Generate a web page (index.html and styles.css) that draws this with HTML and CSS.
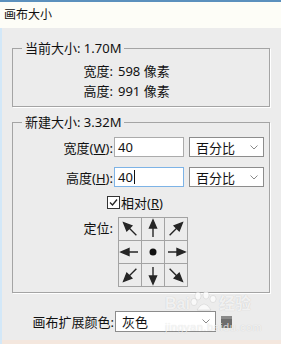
FILE: index.html
```html
<!DOCTYPE html>
<html lang="zh-CN">
<head>
    <meta charset="UTF-8">
    <meta name="viewport" content="width=device-width, initial-scale=1.0">
    <title>画布大小</title>
    <link rel="stylesheet" href="styles.css">
</head>
<body>
    <div class="window">
        <div class="titlebar">画布大小</div>

        <div class="content">
            <fieldset class="group current">
                <legend>当前大小: 1.70M</legend>
                <div class="row info">
                    <span class="label">宽度:</span>
                    <span class="value">598 像素</span>
                </div>
                <div class="row info">
                    <span class="label">高度:</span>
                    <span class="value">991 像素</span>
                </div>
            </fieldset>

            <fieldset class="group new">
                <legend>新建大小: 3.32M</legend>
                <div class="row field">
                    <span class="label">宽度(<u>W</u>):</span>
                    <div class="input">40</div>
                    <div class="select">百分比
                        <svg class="chevron" width="8" height="5" viewBox="0 0 8 5"><polyline points="0.5,0.5 4,4 7.5,0.5"/></svg>
                    </div>
                </div>
                <div class="row field">
                    <span class="label">高度(<u>H</u>):</span>
                    <div class="input focused">40<span class="caret"></span></div>
                    <div class="select">百分比
                        <svg class="chevron" width="8" height="5" viewBox="0 0 8 5"><polyline points="0.5,0.5 4,4 7.5,0.5"/></svg>
                    </div>
                </div>
                <div class="check-row">
                    <span class="checkbox">
                        <svg width="11" height="11" viewBox="0 0 11 11"><polyline points="2,5.5 4.5,8 9,2.5"/></svg>
                    </span>
                    <span>相对(<u>R</u>)</span>
                </div>
                <div class="row anchor-row">
                    <span class="label">定位:</span>
                    <div class="anchor">
                        <div class="cell"><svg class="arrow r-315" viewBox="0 0 22 22"><path d="M11 20V9"/><polygon points="11,2 7.5,10 14.5,10"/></svg></div>
                        <div class="cell"><svg class="arrow" viewBox="0 0 22 22"><path d="M11 19V9"/><polygon points="11,2 7.5,10 14.5,10"/></svg></div>
                        <div class="cell"><svg class="arrow r-45" viewBox="0 0 22 22"><path d="M11 20V9"/><polygon points="11,2 7.5,10 14.5,10"/></svg></div>
                        <div class="cell"><svg class="arrow r-270" viewBox="0 0 22 22"><path d="M11 19V9"/><polygon points="11,2 7.5,10 14.5,10"/></svg></div>
                        <div class="cell"><svg class="dot" viewBox="0 0 22 22"><circle cx="11" cy="11" r="3.5"/></svg></div>
                        <div class="cell"><svg class="arrow r-90" viewBox="0 0 22 22"><path d="M11 19V9"/><polygon points="11,2 7.5,10 14.5,10"/></svg></div>
                        <div class="cell"><svg class="arrow r-225" viewBox="0 0 22 22"><path d="M11 20V9"/><polygon points="11,2 7.5,10 14.5,10"/></svg></div>
                        <div class="cell"><svg class="arrow r-180" viewBox="0 0 22 22"><path d="M11 19V9"/><polygon points="11,2 7.5,10 14.5,10"/></svg></div>
                        <div class="cell"><svg class="arrow r-135" viewBox="0 0 22 22"><path d="M11 20V9"/><polygon points="11,2 7.5,10 14.5,10"/></svg></div>
                    </div>
                </div>
            </fieldset>

            <div class="row bottom">
                <span class="label">画布扩展颜色:</span>
                <div class="select wide">灰色
                    <svg class="chevron" width="8" height="5" viewBox="0 0 8 5"><polyline points="0.5,0.5 4,4 7.5,0.5"/></svg>
                </div>
                <span class="swatch"></span>
            </div>

            <div class="strip"></div>
        </div>

        <!-- watermark from the original screenshot -->
        <div class="watermark">
            <div class="wm-logo">Bai<svg class="paw" width="30" height="20" viewBox="0 0 30 20"><ellipse cx="8" cy="5" rx="3" ry="4"/><ellipse cx="16" cy="4" rx="3" ry="4"/><ellipse cx="23" cy="8" rx="3" ry="3.5"/><ellipse cx="4" cy="11" rx="3" ry="3.5"/><path d="M7 19 Q14 7 21 19 Z"/></svg>经验</div>
            <div class="wm-url">jingyan.baidu.com</div>
        </div>
    </div>
</body>
</html>
```

FILE: styles.css
```css
* { box-sizing: border-box; }
body {
    margin: 0;
    width: 281px;
    height: 344px;
    overflow: hidden;
    background: #ececec;
    font-family: "Noto Sans", "Noto Sans CJK SC", sans-serif;
    font-size: 13px;
    color: #111;
}
.window {
    position: relative;
    height: 344px;
}
.titlebar {
    height: 28px;
    line-height: 25px;
    padding-left: 4px;
    font-size: 12px;
    background: #fdfdf7;
    border-top: 2px solid #5b90bd;
}
.content {
    height: 316px;
    border-left: 2px solid #d3e8f8;
    display: flex;
    flex-direction: column;
}
.group {
    width: 258px;
    margin: 0 0 0 10px;
    padding: 0;
    border: 1px solid #a4a4a4;
    box-shadow: 1px 1px 0 #fff;
}
.group legend {
    margin-left: 9px;
    padding: 0 3px;
    line-height: 16px;
}
.group.current {
    margin-top: 12px;
    padding: 4px 0 6px;
}
.group.new {
    margin-top: 7px;
    padding: 7px 0 5px;
}
.row {
    display: flex;
    align-items: center;
}
.label {
    width: 100px;
    flex-shrink: 0;
    text-align: right;
}
.info { height: 20px; }
.info .value { margin-left: 5px; }
.field { height: 20px; }
.field + .field { margin-top: 10px; }
.input {
    width: 70px;
    height: 20px;
    margin-left: 1px;
    padding-left: 3px;
    line-height: 18px;
    background: #fff;
    border: 1px solid #ababab;
}
.input.focused { border-color: #7db3e6; }
.caret {
    display: inline-block;
    width: 1px;
    height: 14px;
    margin-left: 1px;
    vertical-align: -2px;
    background: #111;
}
.select {
    display: flex;
    justify-content: space-between;
    align-items: center;
    width: 75px;
    height: 20px;
    margin-left: 5px;
    padding: 0 5px 0 6px;
    background: #fff;
    border: 1px solid #8c8c8c;
}
.chevron {
    fill: none;
    stroke: #8a8a8a;
    stroke-width: 1;
}
.check-row {
    display: flex;
    align-items: center;
    height: 16px;
    margin-top: 7px;
    padding-left: 94px;
}
.checkbox {
    display: flex;
    align-items: center;
    justify-content: center;
    width: 13px;
    height: 13px;
    margin-right: 1px;
    background: #fff;
    border: 1px solid #333;
}
.checkbox svg {
    fill: none;
    stroke: #222;
    stroke-width: 1.3;
}
.anchor-row {
    align-items: flex-start;
    margin-top: 7px;
}
.anchor-row .label { line-height: 22px; }
.anchor {
    display: grid;
    grid-template-columns: repeat(3, 22px);
    grid-template-rows: repeat(3, 22px);
    gap: 1px;
    padding: 1px;
    margin-left: 5px;
    background: #a3a3a3;
}
.cell {
    background: #ececec;
    display: flex;
    align-items: center;
    justify-content: center;
}
.arrow {
    width: 22px;
    height: 22px;
    fill: #262626;
    stroke: #262626;
    stroke-width: 1.4;
}
.r-45 { transform: rotate(45deg); }
.r-90 { transform: rotate(90deg); }
.r-135 { transform: rotate(135deg); }
.r-180 { transform: rotate(180deg); }
.r-225 { transform: rotate(225deg); }
.r-270 { transform: rotate(270deg); }
.r-315 { transform: rotate(315deg); }
.dot { width: 22px; height: 22px; fill: #111; }
.bottom {
    height: 21px;
    margin-top: 18px;
}
.bottom .label { width: 112px; }
.select.wide {
    width: 101px;
    height: 21px;
    margin-left: 1px;
}
.swatch {
    width: 11px;
    height: 12px;
    margin-left: 5px;
    background: linear-gradient(#8a8a8a 0 3px, #6d6d6d 3px);
}
.strip {
    height: 4px;
    margin-top: auto;
    background: #f4e7de;
}
.watermark {
    position: absolute;
    left: 165px;
    top: 291px;
    color: rgba(255, 255, 255, 0.75);
    text-shadow: 0 0 1px rgba(0, 0, 0, 0.18);
    pointer-events: none;
}
.wm-logo {
    display: flex;
    align-items: flex-end;
    height: 22px;
    font-family: "Liberation Sans", "Noto Sans CJK SC", sans-serif;
    font-size: 16px;
    font-weight: bold;
    line-height: 18px;
}
.paw {
    fill: rgba(255, 255, 255, 0.7);
    stroke: rgba(0, 0, 0, 0.08);
    margin: 0 -1px 2px 0;
}
.wm-url {
    margin-top: 9px;
    font-family: "Liberation Sans", sans-serif;
    font-size: 11px;
    line-height: 10px;
    letter-spacing: 0.5px;
}
```
